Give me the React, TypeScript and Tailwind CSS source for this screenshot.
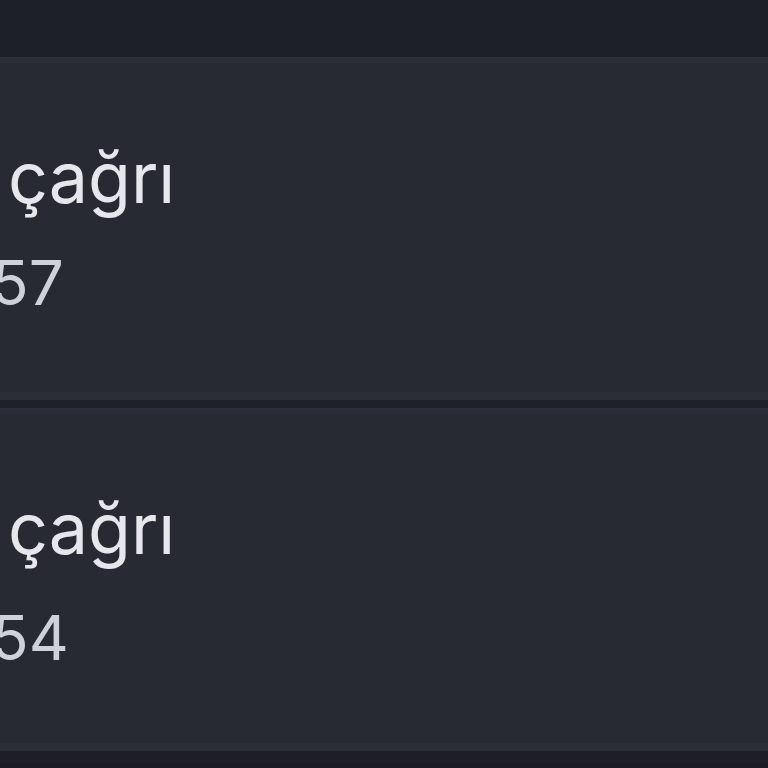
import React from "react";

const font = { fontFamily: "Inter, 'Noto Sans', sans-serif" };

function Card({ num, extra }: { num: string; extra?: boolean }) {
  return (
    <div className="h-[343px] w-full bg-[#272a33] border-t-[6px] border-t-[#2b2e37] border-b-[8px] border-b-[#2b2e37] overflow-hidden">
      <div className="pt-[80px] pl-[8px]">
        <div className="text-[70px] leading-none text-[#e6e7ec]">çağrı</div>
        <div className={`${extra ? "mt-[43px]" : "mt-[39px]"} -ml-[17px] text-[62px] leading-none text-[#cfd1d8]`}>{num}</div>
      </div>
    </div>
  );
}

export default function App() {
  return (
    <div className="w-[768px] h-[768px] bg-[#1e2029] flex flex-col overflow-hidden" style={font}>
      <div className="h-[57px] shrink-0 bg-[#1e2029]" />
      <Card num="57" />
      <div className="h-[8px] shrink-0 bg-[#1f2129]" />
      <Card num="54" extra />
      <div className="h-[12px] shrink-0 bg-[#1d1f27]" />
      <div className="flex-1 bg-[#1a1c22]" />
    </div>
  );
}
